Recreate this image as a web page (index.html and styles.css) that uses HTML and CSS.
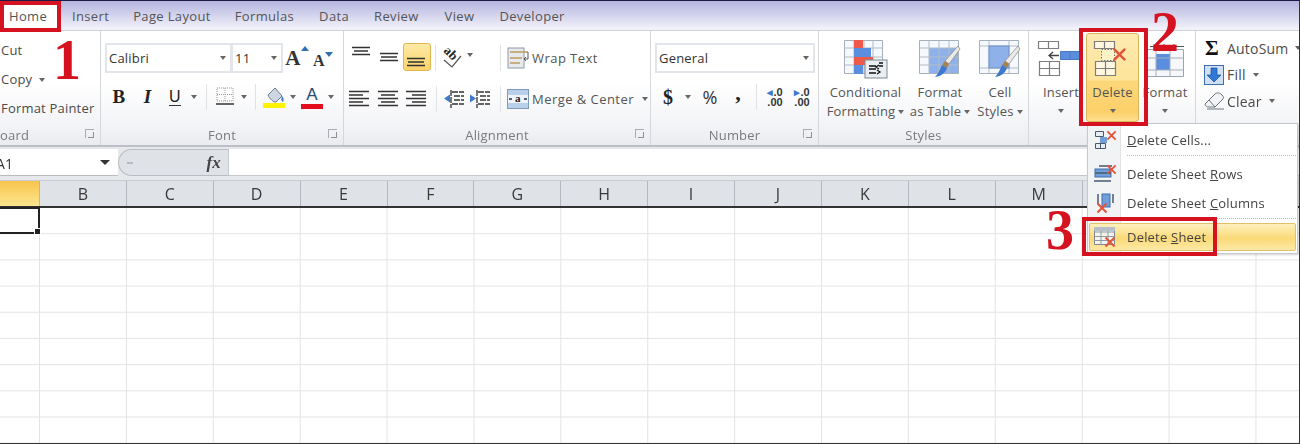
FILE: index.html
```html
<!DOCTYPE html>
<html>
<head>
  <meta charset="utf-8" />
  <title>Delete Sheet</title>
  <link rel="stylesheet" href="styles.css">
</head>
<body>
  <svg class="defs" width="0" height="0">
    <symbol id="brush" viewBox="0 0 30 38">
      <path d="M27 6l2 3-11 15-4-3z" fill="#eceae4" stroke="#8f8f8f" stroke-width=".8"/>
      <path d="M14 21l4 3-2 4-5-3z" fill="#a8824c"/>
      <path d="M11 25l5 3c-2 5-5 8-12 9 3-3 5-7 7-12z" fill="#3f78cc"/>
    </symbol>
    <symbol id="redx" viewBox="0 0 12 12">
      <path d="M1.500 1.500l9 9M10.500 1.500l-9 9" stroke="#e2533c" stroke-width="2" fill="none"/>
    </symbol>
  </svg>

  <div class="page">
    <nav class="tabs">
      <span class="tab tab-home">Home</span>
      <span class="tab tab-insert">Insert</span>
      <span class="tab tab-layout">Page Layout</span>
      <span class="tab tab-formulas">Formulas</span>
      <span class="tab tab-data">Data</span>
      <span class="tab tab-review">Review</span>
      <span class="tab tab-view">View</span>
      <span class="tab">Developer</span>
    </nav>

    <section class="ribbon">
      <!-- Clipboard -->
      <div class="group group-clip">
        <div class="group-body clip-list">
          <span>Cut</span>
          <span>Copy <i class="arrow"></i></span>
          <span>Format Painter</span>
        </div>
        <div class="group-label label-left">oard<i class="launcher"></i></div>
      </div>

      <!-- Font -->
      <div class="group group-font">
        <div class="group-body rows">
          <div class="row font-top">
            <div class="combo combo-name">Calibri<i class="arrow"></i></div>
            <div class="combo combo-size">11<i class="arrow"></i></div>
            <span class="grow-a">A<svg width="8" height="5" viewBox="0 0 8 5"><path d="M0 5l4-5 4 5z" fill="#2f6fb5"/></svg></span>
            <span class="grow-a grow-small">A<svg width="8" height="5" viewBox="0 0 8 5"><path d="M0 0l4 5 4-5z" fill="#2f6fb5"/></svg></span>
          </div>
          <div class="row font-bottom">
            <b class="serif-btn">B</b>
            <i class="serif-btn">I</i>
            <span class="serif-btn serif-u">U</span>
            <i class="arrow"></i>
            <i class="vsep"></i>
            <svg width="20" height="20" viewBox="0 0 20 20">
              <path d="M2 1h16v13H2zM10 1v13M2 7.500h16" fill="none" stroke="#999" stroke-dasharray="1 1"/>
              <path d="M1 17h18" stroke="#333" stroke-width="1.500"/>
            </svg>
            <i class="arrow"></i>
            <i class="vsep"></i>
            <svg width="24" height="22" viewBox="0 0 24 22">
              <path d="M6 9l7-7 7 8-6 6c-2 1-7-4-8-7z" fill="#cdd7e2" stroke="#68788c"/>
              <path d="M20 10c2 2 2 4 1 6-2-1-2-3-1-6z" fill="#3f78cc"/>
              <rect x="1" y="17" width="22" height="5" fill="#fff200"/>
            </svg>
            <i class="arrow"></i>
            <span class="color-a">A</span>
            <i class="arrow"></i>
          </div>
        </div>
        <div class="group-label">Font<i class="launcher"></i></div>
      </div>

      <!-- Alignment -->
      <div class="group group-align">
        <div class="group-body rows">
          <div class="row align-top">
            <svg width="20" height="28" viewBox="0 0 20 28"><path d="M1 4.500h18M3 8h14M1 11.500h18" stroke="#333" stroke-width="1.300"/></svg>
            <svg width="20" height="28" viewBox="0 0 20 28"><path d="M1 10.500h18M2 14h16M1 17.500h18" stroke="#333" stroke-width="1.300"/></svg>
            <span class="align-on"><svg width="20" height="28" viewBox="0 0 20 28"><path d="M1 15.500h18M2 19h16M1 22.500h18" stroke="#333" stroke-width="1.300"/></svg></span>
            <i class="vsep"></i>
            <svg class="ab-icon" width="24" height="24" viewBox="0 0 24 24">
              <text x="3" y="9" transform="rotate(45 7 6)">ab</text>
              <path d="M3 14l8 7 9-11" fill="none" stroke="#555" stroke-width="1.200"/>
            </svg>
            <i class="arrow"></i>
            <i class="vsep"></i>
            <span class="wide-btn">
              <svg width="22" height="22" viewBox="0 0 22 22">
                <rect x="1" y="1" width="16" height="20" fill="#e6e9ee" stroke="#8f9aa6"/>
                <path d="M3 5h18M3 11h12M3 16h10" stroke="#bd9c5c" stroke-width="1.500"/>
                <path d="M21 5v7h-4M19 10l-2 2 2 2" stroke="#555" fill="none"/>
              </svg>
              <span class="wide-text">Wrap Text</span>
            </span>
          </div>
          <div class="row align-bottom">
            <svg width="20" height="18" viewBox="0 0 20 18"><path d="M0 1.500h20M0 5h14M0 8.500h20M0 12h14M0 15.500h20" stroke="#333" stroke-width="1.300"/></svg>
            <svg width="20" height="18" viewBox="0 0 20 18"><path d="M0 1.500h20M3 5h14M0 8.500h20M3 12h14M0 15.500h20" stroke="#333" stroke-width="1.300"/></svg>
            <svg width="20" height="18" viewBox="0 0 20 18"><path d="M0 1.500h20M6 5h14M0 8.500h20M6 12h14M0 15.500h20" stroke="#333" stroke-width="1.300"/></svg>
            <i class="vsep"></i>
            <svg width="20" height="18" viewBox="0 0 20 18">
              <path d="M0 8.500l6-4v8z" fill="#3f78cc"/>
              <path d="M8 2h12M10 6h10M10 10h10M8 14h12M7 0v18" stroke="#333" stroke-width="1.300" stroke-dasharray="6 1"/>
            </svg>
            <svg width="20" height="18" viewBox="0 0 20 18">
              <path d="M6 8.500l-6-4v8z" fill="#3f78cc"/>
              <path d="M8 2h12M10 6h10M10 10h10M8 14h12M7 0v18" stroke="#333" stroke-width="1.300" stroke-dasharray="6 1"/>
            </svg>
            <i class="vsep"></i>
            <span class="wide-btn">
              <svg class="merge-icon" width="22" height="20" viewBox="0 0 22 20">
                <rect x=".5" y=".5" width="21" height="19" fill="#b9d0ea" stroke="#7f9ab8"/>
                <rect x="1" y="6" width="20" height="8" fill="#eef3f9"/>
                <text x="11" y="13" text-anchor="middle">a</text>
                <path d="M2 10h3M20 10h-3" stroke="#234" stroke-width="1.500"/>
              </svg>
              <span class="wide-text">Merge &amp; Center</span>
              <i class="arrow merge-arrow"></i>
            </span>
          </div>
        </div>
        <div class="group-label">Alignment<i class="launcher"></i></div>
      </div>

      <!-- Number -->
      <div class="group group-number">
        <div class="group-body rows">
          <div class="row number-top">
            <div class="combo combo-format">General<i class="arrow"></i></div>
          </div>
          <div class="row number-bottom">
            <b class="serif-btn money">$</b>
            <i class="arrow"></i>
            <span class="percent">%</span>
            <b class="serif-btn comma">,</b>
            <i class="vsep"></i>
            <span class="decimal"><em>&#9666;</em>.0<br>.00</span>
            <span class="decimal"><em>&#9656;</em>.0<br>.00</span>
          </div>
        </div>
        <div class="group-label">Number<i class="launcher"></i></div>
      </div>

      <!-- Styles -->
      <div class="group group-styles">
        <div class="group-body styles-row">
          <div class="big">
            <svg width="44" height="38" viewBox="0 0 44 38">
              <path d="M.5 .5h38v33H.5z" fill="#f5f8fc" stroke="#a5b0bc"/>
              <path d="M10 .5v33M20 .5v33M29 .5v33M.5 8h38M.5 17h38M.5 25h38" stroke="#b2bcc8"/>
              <rect x="10" y="0" width="9" height="8" fill="#ee5a49"/>
              <rect x="10" y="8" width="17" height="9" fill="#5b8ede"/>
              <rect x="10" y="17" width="19" height="8" fill="#ee5a49"/>
              <rect x="10" y="25" width="9" height="9" fill="#5b8ede"/>
              <rect x="21" y="20" width="22" height="18" fill="#e9eef3" stroke="#7a8794"/>
              <path d="M25 26h7M25 29h7M25 33h7M35 25l-3 2 3 2M33 30l3 2-3 2M35 23h4M35 26h4" stroke="#111" stroke-width="1.300" fill="none"/>
            </svg>
            <span class="big-text">Conditional<br>Formatting<i class="arrow arrow-in"></i></span>
          </div>
          <div class="big">
            <svg width="42" height="38" viewBox="0 0 42 38">
              <path d="M.5 .5h39v33H.5z" fill="#f5f8fc" stroke="#a5b0bc"/>
              <rect x="10" y="8" width="29" height="25" fill="#8fb1ea"/>
              <path d="M10 .5v33M20 .5v33M30 .5v33M.5 8h39M.5 17h39M.5 25h39" stroke="#b2bcc8"/>
              <use href="#brush" x="12" y="0" width="30" height="38"/>
            </svg>
            <span class="big-text">Format<br>as Table<i class="arrow arrow-in"></i></span>
          </div>
          <div class="big">
            <svg width="42" height="38" viewBox="0 0 42 38">
              <path d="M.5 .5h39v33H.5z" fill="#f5f8fc" stroke="#a5b0bc"/>
              <path d="M10 .5v33M30 .5v33M.5 6h39M.5 28h39" stroke="#b2bcc8"/>
              <rect x="10" y="6" width="20" height="22" fill="#8fb1ea" stroke="#6f8fc4"/>
              <use href="#brush" x="12" y="0" width="30" height="38"/>
            </svg>
            <span class="big-text">Cell<br>Styles<i class="arrow arrow-in"></i></span>
          </div>
        </div>
        <div class="group-label">Styles</div>
      </div>

      <!-- Cells -->
      <div class="group group-cells">
        <div class="group-body cells-row">
          <div class="big">
            <svg class="insert-icon" width="42" height="36" viewBox="0 0 42 36">
              <path d="M.5 .5h20v7H.5zM10.500 .5v7M1.500 20.500h20v14h-20zM11.500 20.500v14M1.500 27.500h20" fill="#fff" stroke="#7d7d7d" stroke-width="1.200"/>
              <path d="M21 14.500H11M15 11l-4 3.500 4 3.500" fill="none" stroke="#444" stroke-width="1.300"/>
              <path d="M22.500 10.500h19v8h-19zM32 10.500v8" fill="#5b8ede" stroke="#4a78c0"/>
            </svg>
            <span class="big-text">Insert</span>
            <i class="arrow arrow-big"></i>
          </div>
          <div class="big big-on">
            <svg class="delete-icon" width="40" height="36" viewBox="0 0 40 36">
              <path d="M3.500 .5h20v7h-20zM13.500 .5v7M4.500 20.500h20v14h-20zM14.500 20.500v14M4.500 27.500h20" fill="#fff7df" stroke="#7d7d7d" stroke-width="1.200"/>
              <rect x="10.500" y="8.500" width="13" height="11" fill="#fdf3c8" stroke="#777" stroke-dasharray="1.500 1.500"/>
              <use href="#redx" x="21" y="6" width="15" height="15"/>
            </svg>
            <span class="big-text">Delete</span>
            <i class="arrow arrow-big"></i>
          </div>
          <div class="big">
            <svg width="42" height="38" viewBox="0 0 42 38">
              <path d="M3.500 9.500h36v27h-36z" fill="#f5f7fa" stroke="#9aa4b0"/>
              <rect x="12" y="14" width="14" height="16" fill="#5b8ede"/>
              <path d="M12 9.500v27M26 9.500v27M3.500 18h36M3.500 30h36" stroke="#a5afba"/>
              <path d="M6 6.500h34M10 4v5M20 4v5M30 4v5" stroke="#555" stroke-width="1"/>
            </svg>
            <span class="big-text">Format</span>
            <i class="arrow arrow-big"></i>
          </div>
        </div>
      </div>

      <!-- Editing -->
      <div class="group group-edit">
        <div class="group-body edit-list">
          <div class="edit-row"><span class="sigma">&Sigma;</span><span>AutoSum</span><i class="arrow"></i></div>
          <div class="edit-row">
            <svg width="20" height="20" viewBox="0 0 20 20">
              <rect x=".5" y=".5" width="19" height="19" fill="#cfe0f5" stroke="#3f6fb0"/>
              <path d="M7 3h6v7h4l-7 7-7-7h4z" fill="#2f78d8" stroke="#1d4f96" stroke-width=".7"/>
            </svg>
            <span>Fill</span><i class="arrow"></i>
          </div>
          <div class="edit-row">
            <svg width="21" height="18" viewBox="0 0 21 18">
              <path d="M1 12L11 2c2-2 5-1 7 1s2 3 0 5l-7 7H5c-2 0-4-1-4-3z" fill="#f1f3f5" stroke="#6d7680"/>
              <path d="M5 8l6 7M3 17h17" stroke="#6d7680"/>
            </svg>
            <span>Clear</span><i class="arrow"></i>
          </div>
        </div>
      </div>
    </section>

    <section class="formula-bar">
      <div class="name-box"><span class="name-text">A1</span><i class="name-arrow"></i></div>
      <div class="fx-strip"><span class="fx-dot"></span><span class="fx">fx</span></div>
      <div class="formula-input"></div>
    </section>

    <section class="sheet">
      <div class="col-heads">
        <span class="col-head col-a"></span>
        <span class="col-head">B</span>
        <span class="col-head">C</span>
        <span class="col-head">D</span>
        <span class="col-head">E</span>
        <span class="col-head">F</span>
        <span class="col-head">G</span>
        <span class="col-head">H</span>
        <span class="col-head">I</span>
        <span class="col-head">J</span>
        <span class="col-head">K</span>
        <span class="col-head">L</span>
        <span class="col-head">M</span>
      </div>
      <div class="cells">
        <div class="active-cell"></div>
      </div>
    </section>

    <!-- dropdown from the Delete button -->
    <div class="menu">
      <div class="menu-item">
        <svg width="24" height="22" viewBox="0 0 24 22">
          <path d="M2.500 2.500h8v5h-8zM2.500 14.500h10v5h-10zM7.500 14.500v5" fill="#e6edf5" stroke="#4a5a6a"/>
          <rect x="7" y="8" width="7" height="6" fill="#6f9ed8"/>
          <use href="#redx" x="13" y="1" width="11" height="11"/>
        </svg>
        <span><u>D</u>elete Cells...</span>
      </div>
      <i class="menu-sep"></i>
      <div class="menu-item">
        <svg width="24" height="22" viewBox="0 0 24 22">
          <rect x="2" y="6" width="16" height="8" fill="#6f9ed8" stroke="#3f6fb0"/>
          <path d="M6 3h13M2 10h16M1 18h17" stroke="#4a5a6a" stroke-width="1.300"/>
          <use href="#redx" x="13" y="1" width="11" height="11"/>
        </svg>
        <span>Delete Sheet <u>R</u>ows</span>
      </div>
      <div class="menu-item">
        <svg width="24" height="22" viewBox="0 0 24 22">
          <rect x="9" y="2" width="8" height="13" fill="#6f9ed8" stroke="#3f6fb0"/>
          <path d="M5 2v10M20 2v9" stroke="#4a5a6a" stroke-width="1.500"/>
          <use href="#redx" x="3" y="10" width="12" height="12"/>
        </svg>
        <span>Delete Sheet <u>C</u>olumns</span>
      </div>
      <i class="menu-sep"></i>
      <div class="menu-item menu-item-on">
        <svg width="24" height="22" viewBox="0 0 24 22">
          <path d="M1.500 1.500h20v17h-20z" fill="#f6f4ea" stroke="#7d8894"/>
          <path d="M1.500 6h20M1.500 10.500h20M1.500 14.500h20M8 1.500v17M15 1.500v17" stroke="#8e9aa6" fill="none"/>
          <rect x="1" y="1" width="21" height="4" fill="#b7c0ca"/>
          <use href="#redx" x="11" y="10" width="12" height="12"/>
        </svg>
        <span>Delete <u>S</u>heet</span>
      </div>
    </div>

    <!-- red marks drawn over the screenshot -->
    <div class="mark mark-home"></div>
    <div class="mark mark-delete"></div>
    <div class="mark mark-sheet"></div>
    <span class="step step-1">1</span>
    <span class="step step-2">2</span>
    <span class="step step-3">3</span>
  </div>
</body>
</html>
```

FILE: styles.css
```css
* {
  box-sizing: border-box;
}

html, body {
  margin: 0;
  padding: 0;
}

body {
  width: 1300px;
  height: 444px;
  overflow: hidden;
  background: #fff;
  font-family: "Open Sans", "Noto Sans", sans-serif;
  font-size: 13px;
  letter-spacing: .2px;
  color: #4b4b4b;
}

.defs {
  position: absolute;
}

.page {
  position: relative;
  width: 1300px;
  height: 444px;
  display: flex;
  flex-direction: column;
  overflow: hidden;
  border-top: 1px solid #1b1b4a;
  border-right: 1px solid #333;
  border-bottom: 1px solid #333;
  filter: blur(.35px);
}

i {
  font-style: normal;
}

svg {
  display: block;
  flex: none;
  overflow: visible;
}

/* tabs */
.tabs {
  height: 30px;
  flex: none;
  display: flex;
  align-items: center;
  background: linear-gradient(#b5b5de, #d4d4ee 50%, #f4f4fb);
  border-bottom: 1px solid #cfd0d6;
}

.tab {
  color: #555;
  letter-spacing: .35px;
}

.tab-home {
  width: 61px;
  height: 30px;
  line-height: 30px;
  padding-left: 9px;
  background: #fff;
}

.tab-insert { margin-left: 11px; margin-right: 24px; }
.tab-layout { margin-right: 24px; }
.tab-formulas { margin-right: 25px; }
.tab-data { margin-right: 25px; }
.tab-review { margin-right: 26px; }
.tab-view { margin-right: 25px; }

/* ribbon */
.ribbon {
  height: 116px;
  flex: none;
  display: flex;
  background: linear-gradient(#fff 45%, #f2f3f6 85%, #e9ebef);
  border-bottom: 2px solid #bcc0c6;
}

.group {
  flex: none;
  display: flex;
  flex-direction: column;
  border-right: 1px solid #d4d7dc;
}

.group-clip { width: 101px; }
.group-font { width: 243px; }
.group-align { width: 307px; }
.group-number { width: 168px; }
.group-styles { width: 210px; }
.group-cells { width: 167px; }
.group-edit { flex: 1; min-width: 0; border-right: 0; }

.group-body {
  height: 94px;
  flex: none;
}

.group-label {
  position: relative;
  flex: 1;
  text-align: center;
  line-height: 20px;
  color: #7a7a7a;
}

.label-left {
  text-align: left;
}

.launcher {
  position: absolute;
  right: 6px;
  top: 4px;
  width: 9px;
  height: 9px;
  border: 1px solid #a9adb3;
  border-width: 1px 0 0 1px;
}

.launcher::after {
  content: "";
  position: absolute;
  right: 0;
  bottom: 0;
  width: 5px;
  height: 5px;
  border: 1px solid #8b9097;
  border-width: 0 1px 1px 0;
}

.arrow {
  display: inline-block;
  flex: none;
  justify-self: center;
  width: 0;
  height: 0;
  border: 3.5px solid transparent;
  border-top: 4px solid #666;
  border-bottom: 0;
}

.vsep {
  justify-self: center;
  width: 1px;
  height: 26px;
  background: #e0e2e6;
}

/* clipboard */
.clip-list {
  padding: 5px 0 0 1px;
  display: flex;
  flex-direction: column;
}

.clip-list span {
  height: 29px;
  line-height: 29px;
  white-space: nowrap;
}

.clip-list .arrow {
  margin-left: 3px;
  vertical-align: 2px;
}

/* rows shared by Font, Alignment and Number */
.rows {
  padding: 12px 0 0;
  display: flex;
  flex-direction: column;
  gap: 11px;
}

.row {
  display: grid;
  align-items: center;
  justify-items: center;
  height: 30px;
}

.font-top {
  grid-template-columns: 127px 51px 28px 24px;
  margin-left: 4px;
}

.font-bottom {
  grid-template-columns: 28px 29px 26px 12px 12px 26px 12px 10px 28px 10px 28px 10px;
  margin-left: 4px;
  height: 26px;
}

.combo {
  width: 100%;
  height: 30px;
  line-height: 28px;
  padding-left: 2px;
  display: flex;
  align-items: center;
  justify-content: space-between;
  border: 2px solid #e2e5ea;
  background: #fff;
  color: #333;
  font-size: 13px;
}

.combo .arrow {
  margin-right: 4px;
}

.combo-size {
  border-left-width: 1px;
}

.grow-a {
  display: flex;
  font-family: "Liberation Serif", serif;
  font-weight: bold;
  font-size: 21px;
  color: #333;
}

.grow-small {
  font-size: 16px;
  padding-top: 5px;
}

.serif-btn {
  font-family: "Liberation Serif", serif;
  font-size: 19px;
  color: #222;
  font-weight: bold;
}

.font-bottom > i.serif-btn {
  font-style: italic;
}

.serif-u {
  font-family: "Liberation Sans", sans-serif;
  font-size: 16px;
  font-weight: normal;
  line-height: 17px;
  border-bottom: 1.500px solid #333;
}

.color-a {
  width: 22px;
  text-align: center;
  font-family: "Liberation Sans", sans-serif;
  font-size: 17px;
  line-height: 19px;
  color: #234a78;
  border-bottom: 5px solid #e30d1d;
}

/* alignment */
.align-top {
  grid-template-columns: 28px 28px 28px 8px 28px 26px 14px auto;
  margin-left: 3px;
  justify-content: start;
  align-items: start;
}

.align-top .arrow {
  justify-self: start;
  margin-top: 10px;
}

.align-top .vsep {
  margin-top: 2px;
}

.ab-icon {
  margin-top: 3px;
}

.align-bottom {
  grid-template-columns: 28px 30px 26px 14px 22px 30px 10px auto;
  padding-left: 1px;
  height: 26px;
  justify-content: start;
}

.align-on {
  display: block;
  width: 28px;
  height: 28px;
  padding-left: 3px;
  background: linear-gradient(#fde9a6, #fdd36b);
  border: 1px solid #e0b750;
  border-radius: 3px;
}

.align-on svg {
  margin-top: -1px;
  margin-left: -1px;
}

.ab-icon text {
  font-family: "Liberation Serif", serif;
  font-weight: bold;
  font-size: 13px;
  fill: #222;
}

.merge-icon text {
  font-family: "Liberation Serif", serif;
  font-weight: bold;
  font-size: 11px;
  fill: #222;
}

.wide-btn {
  display: flex;
  align-items: center;
  gap: 3px;
  white-space: nowrap;
  justify-self: start;
  height: 30px;
  letter-spacing: .45px;
}

.align-bottom .wide-btn {
  margin-left: 2px;
}

.wide-text {
  color: #555;
}

.merge-arrow {
  margin-left: 5px;
}

/* number */
.number-top {
  grid-template-columns: 160px;
  margin-left: 4px;
}

.number-bottom {
  grid-template-columns: 32px 8px 36px 20px 16px 22px 32px;
  padding-left: 1px;
  height: 26px;
  justify-content: start;
}

.money {
  font-size: 20px;
}

.comma {
  font-size: 22px;
  margin-top: -8px;
}

.percent {
  font-size: 18px;
  color: #333;
}

.decimal {
  font-family: "Liberation Sans", sans-serif;
  font-size: 11px;
  font-weight: bold;
  line-height: 10px;
  letter-spacing: 0;
  color: #333;
  text-align: right;
  white-space: nowrap;
}

.decimal em {
  font-style: normal;
  color: #3f78cc;
}

/* big buttons */
.styles-row,
.cells-row {
  display: grid;
  padding-left: 7px;
}

.styles-row { grid-template-columns: 79px 70px 50px; }
.cells-row { grid-template-columns: 50px 53px 52px; }

.big {
  display: flex;
  flex-direction: column;
  align-items: center;
  padding-top: 9px;
  white-space: nowrap;
}

.big-text {
  display: block;
  margin-top: 5px;
  line-height: 19px;
  text-align: center;
  color: #555;
}

.arrow-in {
  margin-left: 3px;
  vertical-align: 2px;
}

.arrow-big {
  margin-top: 7px;
}

.cells-row .big svg {
  height: 38px;
}

.cells-row .insert-icon {
  margin-left: -4px;
}

.cells-row .delete-icon {
  margin-left: -3px;
}

.big-on {
  height: 89px;
  margin-top: 2px;
  padding-top: 6px;
  border: 1px solid #d8b65c;
  border-radius: 3px;
  background: linear-gradient(#fdeab0, #fde49a 53%, #fcd779 54%, #fbd06a 90%, #fde08f);
}

/* editing */
.edit-list {
  padding: 4px 0 0 8px;
  display: flex;
  flex-direction: column;
}

.edit-row {
  display: grid;
  grid-template-columns: 23px auto auto;
  justify-content: start;
  justify-items: start;
  align-items: center;
  height: 26.500px;
  font-size: 14px;
  white-space: nowrap;
}

.edit-row .arrow {
  margin-left: 7px;
}

.sigma {
  font-family: "Liberation Serif", serif;
  font-size: 21px;
  font-weight: bold;
  line-height: 20px;
  color: #111;
  padding-left: 1px;
}

/* formula bar */
.formula-bar {
  height: 34px;
  flex: none;
  display: flex;
  padding: 2px 0 4px;
  background: #e6e8ec;
  border-bottom: 1px solid #c9ccd1;
}

.name-box {
  position: relative;
  width: 118px;
  background: #fff;
  border-bottom: 1px solid #bbb;
  line-height: 29px;
  font-size: 14px;
  color: #333;
}

.name-text {
  margin-left: -4px;
}

.name-arrow {
  position: absolute;
  left: 100px;
  top: 11px;
  width: 0;
  height: 0;
  border: 5px solid transparent;
  border-top: 5px solid #333;
  border-bottom: 0;
}

.fx-strip {
  width: 110px;
  display: flex;
  align-items: center;
  justify-content: space-between;
  padding: 0 7px 0 8px;
  background: #dfe2e7;
  border: 1px solid #b9bdc3;
  border-right: 0;
  border-radius: 14px 0 0 14px;
}

.fx-dot {
  width: 6px;
  height: 2px;
  background: #b5bac1;
}

.fx {
  font-family: "Liberation Serif", serif;
  font-style: italic;
  font-weight: bold;
  font-size: 17px;
  color: #444;
}

.formula-input {
  flex: 1;
  background: #fff;
  border: 1px solid #c4c7cc;
  border-width: 0 0 1px 1px;
}

/* sheet */
.sheet {
  flex: 1;
  display: flex;
  flex-direction: column;
}

.col-heads {
  height: 27px;
  flex: none;
  display: flex;
  background: #dfe2e7;
  border-bottom: 2px solid #333;
}

.col-head {
  width: 86.900px;
  flex: none;
  text-align: center;
  line-height: 27px;
  font-size: 16px;
  color: #3a3a3a;
  border-right: 1px solid #b4b8be;
}

.col-head.col-a {
  width: 40px;
  background: linear-gradient(#f8c44c, #fde68f);
}

.cells {
  position: relative;
  flex: 1;
  background-color: #fff;
  background-image:
    linear-gradient(to right, #e3e3e5 1px, transparent 1px),
    linear-gradient(to bottom, #e3e3e5 1px, transparent 1px);
  background-size: 86.900px 100%, 100% 26.200px;
  background-position: 39px 0, 0 25.200px;
}

.active-cell {
  position: absolute;
  left: -3px;
  top: -1px;
  width: 43px;
  height: 27px;
  border: 2px solid #222;
}

.active-cell::after {
  content: "";
  position: absolute;
  right: -3px;
  bottom: -3px;
  width: 5px;
  height: 5px;
  background: #222;
  border: 1px solid #fff;
}

/* dropdown */
.menu {
  position: absolute;
  left: 1087px;
  top: 122px;
  width: 211px;
  height: 131px;
  padding: 2px 1px;
  background: linear-gradient(to right, #f2f3f5 32px, #e0e2e6 32px, #e0e2e6 33px, #fff 33px);
  border: 1px solid #c6c8cc;
  box-shadow: 1px 1px 2px rgba(0, 0, 0, .18);
}

.menu-item {
  height: 28px;
  display: flex;
  align-items: center;
  gap: 10px;
  padding-left: 4px;
  color: #444;
  letter-spacing: .2px;
}

.menu-item + .menu-item {
  margin-top: 1px;
}

.menu-sep {
  display: block;
  height: 1px;
  margin: 1px 0 4px 38px;
  border-top: 1px dotted #bbb;
}

.menu-item-on {
  padding-left: 3px;
  border: 1px solid #e3c168;
  border-radius: 2px;
  background: linear-gradient(#fdf0bf, #fbd977 55%, #fde9a6);
}

/* annotations */
.mark {
  position: absolute;
  border: 4px solid #d5121f;
}

.mark-home {
  left: 0;
  top: 0;
  width: 61px;
  height: 31px;
}

.mark-delete {
  left: 1079px;
  top: 27px;
  width: 69px;
  height: 98px;
}

.mark-sheet {
  left: 1082px;
  top: 216px;
  width: 135px;
  height: 39px;
}

.step {
  position: absolute;
  font-family: "Liberation Serif", serif;
  font-weight: bold;
  font-size: 56px;
  line-height: 56px;
  color: #d5121f;
}

.step-1 { left: 53px; top: 31px; }
.step-2 { left: 1151px; top: 3px; }
.step-3 { left: 1046px; top: 201px; }
```
